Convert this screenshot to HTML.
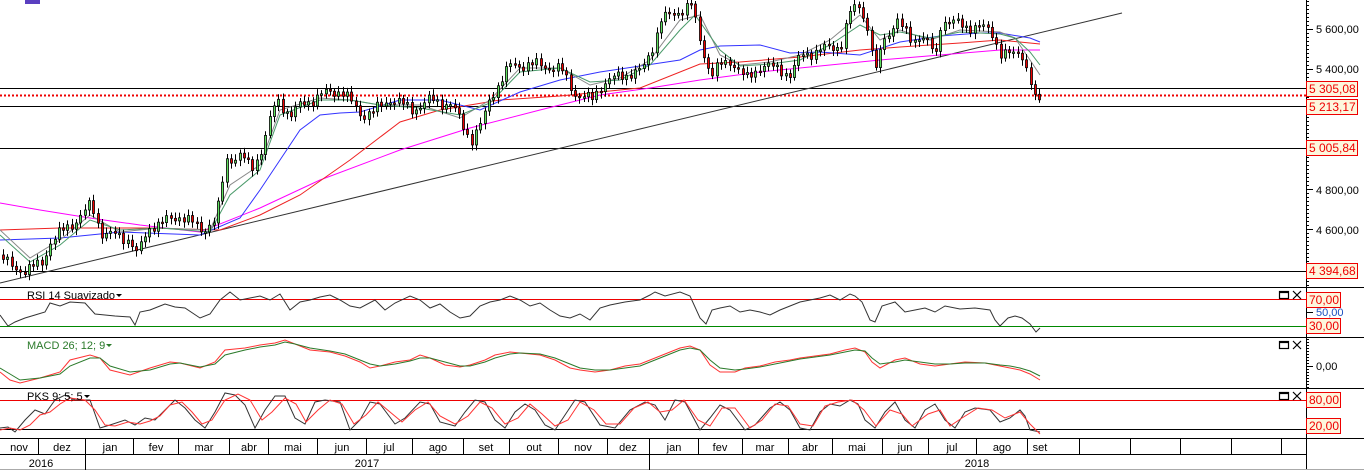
<!DOCTYPE html>
<html><head><meta charset="utf-8"><style>
html,body{margin:0;padding:0;background:#fff;width:1364px;height:470px;overflow:hidden}
svg{display:block;font-family:"Liberation Sans",sans-serif}
</style></head><body>
<svg id="s" width="1364" height="470" xmlns="http://www.w3.org/2000/svg">
<rect width="1364" height="470" fill="#fff"/>
<rect x="25" y="0" width="15" height="4" fill="#5a3fc0"/>
<g stroke="#000" stroke-width="1">
<line x1="0" y1="88.5" x2="1306" y2="88.5"/>
<line x1="0" y1="106.5" x2="1306" y2="106.5"/>
<line x1="0" y1="148.5" x2="1306" y2="148.5"/>
<line x1="0" y1="271.5" x2="1306" y2="271.5"/>
</g>
<line x1="0" y1="95.5" x2="1306" y2="95.5" stroke="#e00" stroke-width="2" stroke-dasharray="2,2"/>
<line x1="0" y1="283" x2="1122" y2="13" stroke="#333" stroke-width="1"/>
<polyline fill="none" stroke="#f0f" stroke-width="1" points="0,203 40,210 90,218 140,225 200,232 260,208 320,180 400,150 470,128 540,110 600,95 650,88 700,80 760,72 820,66 880,60 940,55 1000,50 1040,50"/>
<polyline fill="none" stroke="#e22" stroke-width="1" points="0,230 60,228 150,228 220,230 260,215 300,195 350,160 400,122 440,110 500,100 560,96 640,88 700,64 740,62 800,57 860,50 900,47 960,43 1000,40 1040,44"/>
<polyline fill="none" stroke="#33f" stroke-width="1" points="0,240 60,238 120,232 200,235 240,218 260,190 280,160 300,130 320,115 340,113 360,112 400,100 440,100 480,110 520,92 560,80 600,72 640,66 680,60 700,50 720,46 760,45 790,53 820,52 860,55 900,42 940,36 980,33 1000,33 1030,38 1040,42"/>
<polyline fill="none" stroke="#888" stroke-width="1" points="0,230 30,258 60,240 90,215 120,232 160,228 210,230 230,185 260,165 280,110 320,98 350,100 380,105 420,105 460,118 490,100 520,68 560,68 590,85 620,78 650,60 680,20 700,15 720,55 740,65 770,62 800,55 830,40 860,15 880,40 900,30 930,40 960,30 1000,32 1015,38 1030,60 1040,75"/>
<polyline fill="none" stroke="#4a9a6a" stroke-width="1" points="0,235 30,262 60,245 90,220 120,230 160,228 210,232 230,195 260,170 280,115 320,100 350,100 380,105 420,108 460,115 490,103 520,72 560,68 590,82 620,80 650,65 680,30 695,15 720,50 740,66 770,64 800,60 830,45 860,25 880,35 900,32 930,38 960,32 1000,34 1015,38 1030,52 1040,65"/>
<g id="candles"></g>
<line x1="1306.5" y1="0" x2="1306.5" y2="470" stroke="#000"/>
<g id="ticks" stroke="#000"></g>
<g font-size="11" fill="#000">
<text x="1316" y="33">5 600,00</text>
<text x="1316" y="73">5 400,00</text>
<text x="1316" y="194">4 800,00</text>
<text x="1316" y="234">4 600,00</text>
<text x="1316" y="370">0,00</text>
<text x="1316" y="316" fill="#1a4fc0">50,00</text>
</g>
<g font-size="12" fill="#e00">
<rect x="1306.5" y="81.5" width="51" height="15" fill="#fdf6dd" stroke="#e00"/><text x="1309" y="93">5 305,08</text>
<rect x="1306.5" y="99.5" width="51" height="15" fill="#fdf6dd" stroke="#e00"/><text x="1309" y="111">5 213,17</text>
<rect x="1306.5" y="140.5" width="51" height="15" fill="#fdf6dd" stroke="#e00"/><text x="1309" y="152">5 005,84</text>
<rect x="1306.5" y="263.5" width="51" height="15" fill="#fdf6dd" stroke="#e00"/><text x="1309" y="275">4 394,68</text>
<rect x="1306.5" y="292.5" width="34" height="15" fill="#fdf6dd" stroke="#e00"/><text x="1309" y="304">70,00</text>
<rect x="1306.5" y="318.5" width="34" height="15" fill="#fdf6dd" stroke="#e00"/><text x="1309" y="330">30,00</text>
<rect x="1306.5" y="392.5" width="34" height="15" fill="#fdf6dd" stroke="#e00"/><text x="1309" y="404">80,00</text>
<rect x="1306.5" y="418.5" width="34" height="15" fill="#fdf6dd" stroke="#e00"/><text x="1309" y="430">20,00</text>
</g>
<g stroke="#000">
<line x1="0" y1="287.5" x2="1364" y2="287.5"/>
<line x1="0" y1="337.5" x2="1364" y2="337.5"/>
<line x1="0" y1="388.5" x2="1364" y2="388.5"/>
<line x1="0" y1="438.5" x2="1364" y2="438.5"/>
<line x1="0" y1="454.5" x2="1306" y2="454.5"/>
</g>
<line x1="0" y1="469.5" x2="1364" y2="469.5" stroke="#aaa"/>
<line x1="0" y1="299.5" x2="1306" y2="299.5" stroke="#e00"/>
<line x1="0" y1="326.5" x2="1306" y2="326.5" stroke="#080"/>
<polyline fill="none" stroke="#333" stroke-width="1" points="0,315 8,326 15,322 25,318 35,315 45,312 50,303 60,306 70,302 85,303 95,314 105,315 115,316 130,317 135,325 140,312 150,310 160,306 165,304 175,307 185,308 200,318 210,314 220,300 230,292 240,300 250,298 260,296 270,300 280,294 290,310 300,302 310,300 320,297 330,295 340,300 350,306 360,308 375,300 385,310 395,303 410,296 420,300 430,308 440,304 450,312 460,318 470,316 480,306 490,302 500,300 510,296 520,300 530,306 540,303 550,310 560,316 570,318 580,314 590,320 600,308 610,305 625,302 640,300 650,295 655,292 665,296 680,292 690,296 700,318 706,324 712,310 720,308 730,306 740,312 750,310 760,312 770,315 780,310 790,306 800,302 810,300 820,298 830,295 840,300 850,294 855,296 862,302 870,320 875,322 882,306 895,302 905,312 915,310 925,308 935,312 945,306 960,309 975,308 990,310 995,320 1000,326 1008,318 1015,316 1022,318 1030,324 1036,332 1040,328"/>
<text x="27" y="299" font-size="11" fill="#000">RSI 14 Suavizado</text><path d="M116,294 h6 l-3,3z" fill="#000"/>
<polyline fill="none" stroke="#f33" stroke-width="1" points="0,372 10,380 20,383 40,378 60,372 70,360 90,355 100,358 110,370 130,375 150,368 170,362 180,363 200,368 215,362 225,350 245,348 260,345 275,343 285,340 295,344 310,350 330,352 345,356 360,362 370,368 380,366 395,362 410,360 420,355 430,358 445,365 460,367 470,365 485,360 495,355 510,352 520,353 540,355 555,360 570,368 580,370 595,372 610,370 625,366 640,364 650,360 665,354 680,348 690,346 700,350 710,365 720,372 735,372 745,368 760,366 775,362 790,360 800,358 815,356 830,354 845,350 855,348 865,352 872,362 880,368 895,360 905,358 920,364 935,366 950,364 965,362 985,363 1000,366 1010,368 1020,370 1030,374 1040,380"/>
<polyline fill="none" stroke="#2a7a2a" stroke-width="1" points="0,368 10,374 20,380 40,378 60,374 70,366 90,358 100,358 110,366 130,372 150,370 170,364 180,363 200,367 215,364 225,355 245,350 260,347 275,345 285,342 295,344 310,348 330,351 345,354 360,360 370,364 380,366 395,364 410,361 420,358 430,358 445,362 460,366 470,366 485,362 495,358 510,354 520,353 540,354 555,358 570,364 580,368 595,370 610,370 625,368 640,366 650,362 665,356 680,350 690,348 700,350 710,360 720,368 735,370 745,369 760,367 775,364 790,361 800,359 815,357 830,355 845,352 855,350 865,351 872,358 880,364 895,362 905,360 920,362 935,364 950,364 965,363 985,363 1000,365 1010,366 1020,368 1030,371 1040,376"/>
<text x="27" y="349" font-size="11" fill="#2a7a2a">MACD 26; 12; 9</text><path d="M106,344 h6 l-3,3z" fill="#2a7a2a"/>
<line x1="0" y1="400.5" x2="1306" y2="400.5" stroke="#e00"/>
<line x1="0" y1="429.5" x2="1306" y2="429.5" stroke="#000"/>
<polyline fill="none" stroke="#333" stroke-width="1" points="0,428 8,427 15,432 25,420 35,410 45,414 55,400 65,395 75,400 90,400 100,428 110,425 125,420 135,425 145,418 155,420 165,410 175,400 185,408 195,420 205,428 215,412 225,393 235,395 245,405 255,428 265,410 275,396 285,396 295,418 305,424 315,402 325,400 340,402 350,430 360,420 370,402 380,404 395,424 405,418 420,402 430,404 440,422 455,426 465,412 475,400 485,402 495,420 505,428 515,412 525,404 535,410 545,425 555,430 565,415 575,400 585,402 600,425 615,428 630,410 645,402 655,405 665,420 675,400 685,402 700,430 710,418 720,405 730,410 745,430 755,425 770,408 780,402 790,410 800,428 810,430 820,412 830,404 840,406 850,400 858,404 865,420 875,428 885,412 895,402 905,420 915,428 925,410 935,404 945,420 955,428 965,412 975,408 990,410 1000,422 1010,418 1020,410 1025,416 1030,430 1040,432"/>
<polyline fill="none" stroke="#f33" stroke-width="1" points="0,430 10,428 20,430 30,425 40,415 50,412 60,404 70,398 85,400 95,410 105,425 115,426 128,422 140,424 150,421 160,416 170,405 182,402 192,412 202,424 212,420 225,400 238,394 250,400 262,420 272,412 285,398 296,404 306,422 318,410 330,400 342,404 354,424 366,415 378,402 390,412 402,422 415,410 428,402 440,416 455,424 468,416 480,402 492,408 505,424 518,418 530,404 542,414 555,426 568,420 580,402 594,410 606,424 620,424 634,408 648,402 660,412 672,410 684,400 698,420 710,426 722,408 735,408 750,428 762,420 775,404 788,406 800,424 813,426 825,406 838,402 852,400 864,410 876,426 890,410 902,414 912,426 928,414 940,410 950,426 962,418 978,408 992,410 1005,418 1020,412 1030,424 1040,434"/>
<text x="27" y="400" font-size="11" fill="#000">PKS 9; 5; 5</text><path d="M84,395 h6 l-3,3z" fill="#000"/>
<g stroke="#000" stroke-width="1.2" fill="none">
<rect x="1279.5" y="291.5" width="9" height="7"/><line x1="1279" y1="292.5" x2="1289" y2="292.5"/><path d="M1293,291 l8,8 M1301,291 l-8,8"/>
<rect x="1279.5" y="341.5" width="9" height="7"/><line x1="1279" y1="342.5" x2="1289" y2="342.5"/><path d="M1293,341 l8,8 M1301,341 l-8,8"/>
<rect x="1279.5" y="392.5" width="9" height="7"/><line x1="1279" y1="393.5" x2="1289" y2="393.5"/><path d="M1293,392 l8,8 M1301,392 l-8,8"/>
</g>
<g stroke="#000">
<line x1="38.5" y1="438" x2="38.5" y2="454"/><line x1="85.5" y1="438" x2="85.5" y2="470"/><line x1="133.5" y1="438" x2="133.5" y2="454"/><line x1="178.5" y1="438" x2="178.5" y2="454"/><line x1="229.5" y1="438" x2="229.5" y2="454"/><line x1="268.5" y1="438" x2="268.5" y2="454"/><line x1="317.5" y1="438" x2="317.5" y2="454"/><line x1="366.5" y1="438" x2="366.5" y2="454"/><line x1="412.5" y1="438" x2="412.5" y2="454"/><line x1="463.5" y1="438" x2="463.5" y2="454"/><line x1="509.5" y1="438" x2="509.5" y2="454"/><line x1="558.5" y1="438" x2="558.5" y2="454"/><line x1="607.5" y1="438" x2="607.5" y2="454"/><line x1="649.5" y1="438" x2="649.5" y2="470"/><line x1="698.5" y1="438" x2="698.5" y2="454"/><line x1="742.5" y1="438" x2="742.5" y2="454"/><line x1="788.5" y1="438" x2="788.5" y2="454"/><line x1="832.5" y1="438" x2="832.5" y2="454"/><line x1="882.5" y1="438" x2="882.5" y2="454"/><line x1="928.5" y1="438" x2="928.5" y2="454"/><line x1="976.5" y1="438" x2="976.5" y2="454"/><line x1="1027.5" y1="438" x2="1027.5" y2="454"/><line x1="1079.5" y1="438" x2="1079.5" y2="454"/><line x1="1130.5" y1="438" x2="1130.5" y2="454"/><line x1="1180.5" y1="438" x2="1180.5" y2="454"/><line x1="1231.5" y1="438" x2="1231.5" y2="454"/><line x1="1281.5" y1="438" x2="1281.5" y2="454"/>
</g>
<g font-size="11" fill="#000" text-anchor="middle">
<text x="19" y="451">nov</text><text x="62" y="451">dez</text><text x="110" y="451">jan</text><text x="156" y="451">fev</text><text x="204" y="451">mar</text><text x="249" y="451">abr</text><text x="293" y="451">mai</text><text x="342" y="451">jun</text><text x="389" y="451">jul</text><text x="438" y="451">ago</text><text x="486" y="451">set</text><text x="534" y="451">out</text><text x="583" y="451">nov</text><text x="628" y="451">dez</text><text x="674" y="451">jan</text><text x="720" y="451">fev</text><text x="765" y="451">mar</text><text x="810" y="451">abr</text><text x="857" y="451">mai</text><text x="905" y="451">jun</text><text x="952" y="451">jul</text><text x="1002" y="451">ago</text><text x="1040" y="451">set</text>
<text x="41" y="467">2016</text><text x="367" y="467">2017</text><text x="977" y="467">2018</text>
</g>
</svg>
<script>
(function(){
var k=[[0,255],[10,268],[20,270],[40,265],[50,240],[70,225],[90,205],[100,232],[130,240],[135,255],[150,225],[170,220],[180,215],[200,230],[215,220],[225,160],[240,155],[250,170],[260,150],[275,100],[290,115],[300,105],[320,95],[340,90],[360,115],[375,110],[390,98],[410,110],[430,100],[450,105],[470,140],[480,125],[490,95],[510,65],[540,65],[560,70],[575,95],[590,100],[600,85],[620,75],[640,72],[650,50],[660,20],[680,10],[690,5],[700,45],[710,75],[720,65],[730,60],[745,80],[760,65],[780,70],[790,75],[800,55],[820,50],[840,45],[850,10],[860,5],[870,45],[875,75],[880,45],[895,20],[910,40],[920,35],[935,55],[940,20],[960,25],[990,30],[1000,55],[1010,55],[1020,50],[1030,85],[1035,105],[1040,97]];
function y(x){for(var i=1;i<k.length;i++){if(x<=k[i][0]){var a=k[i-1],b=k[i];return a[1]+(b[1]-a[1])*(x-a[0])/(b[0]-a[0]);}}return 97;}
var g=document.getElementById('candles'),h='',prev=y(0);
for(var x=2;x<=1040;x+=4.3){var c=y(x)+Math.sin(x*1.7)*4+Math.sin(x*0.63)*3;var o=prev;var up=c<o;var t=Math.min(o,c),b=Math.max(o,c);if(b-t<1.5)b=t+1.5;
var X=Math.round(x);
h+='<line x1="'+(X+1.5)+'" y1="'+(t-3-Math.abs(Math.sin(x))*3)+'" x2="'+(X+1.5)+'" y2="'+(b+3+Math.abs(Math.cos(x))*3)+'" stroke="#000"/>';
h+='<rect x="'+(X+0.5)+'" y="'+t+'" width="2" height="'+(b-t)+'" fill="'+(up?'#5fe05f':'#e00')+'" stroke="#000" stroke-width="0.8"/>';
prev=c;}
g.innerHTML=h;
var t='';
for(var yy=0;yy<287;yy+=4){var L=((yy%20)==9)?5:2;t+='<line x1="1307" y1="'+(yy+1.5)+'" x2="'+(1307+L)+'" y2="'+(yy+1.5)+'"/>';}
for(var yy=339;yy<388;yy+=3){t+='<line x1="1307" y1="'+(yy+0.5)+'" x2="1309" y2="'+(yy+0.5)+'"/>';}
[33-4,73-4,194-5,234-5].forEach(function(v){t+='<line x1="1307" y1="'+(v+0.5)+'" x2="1313" y2="'+(v+0.5)+'"/>';});
t+='<line x1="1307" y1="312.5" x2="1313" y2="312.5"/><line x1="1307" y1="366.5" x2="1313" y2="366.5"/>';
document.getElementById('ticks').innerHTML=t;
})();
</script>
</body></html>
